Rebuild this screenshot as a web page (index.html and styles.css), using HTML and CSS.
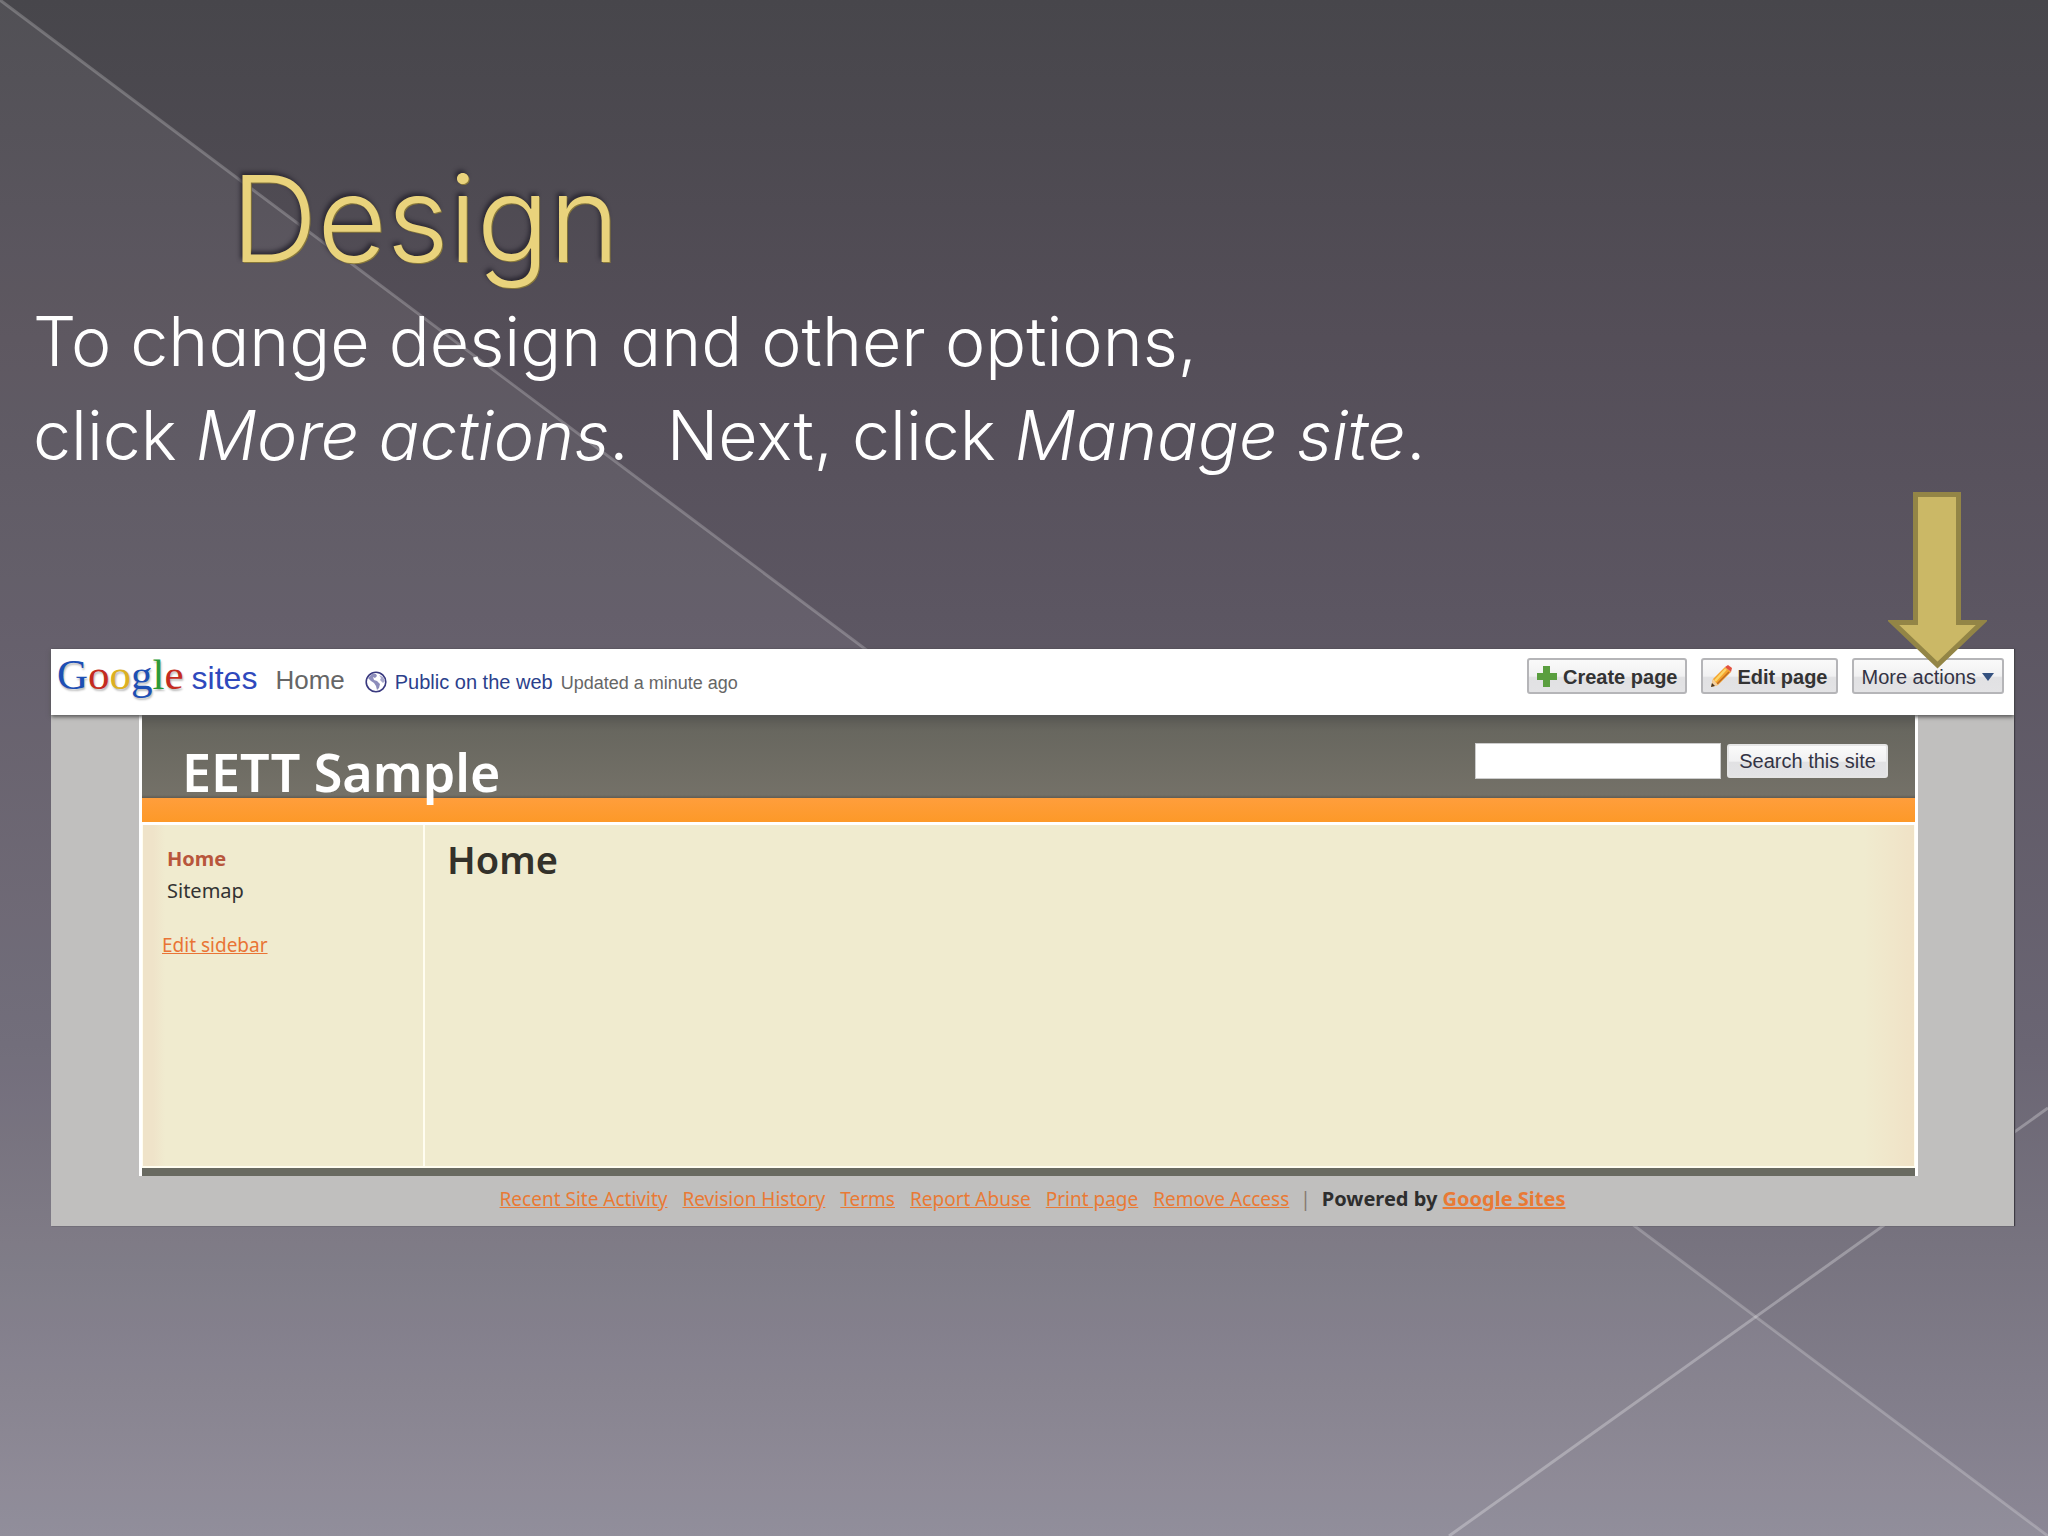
FILE: index.html
```html
<!DOCTYPE html>
<html lang="en">
<head>
  <meta charset="UTF-8">
  <meta name="viewport" content="width=device-width, initial-scale=1.0">
  <title>Design</title>
  <link rel="stylesheet" href="styles.css">
</head>
<body>

  <!-- diagonal background lines -->
  <svg class="backdrop" viewBox="0 0 2048 1536" preserveAspectRatio="none" aria-hidden="true">
    <path d="M0 0L2048 1536H0Z" fill="#fff" fill-opacity=".06"/>
    <path d="M0 0L2048 1536" stroke="#fff" stroke-opacity=".22" stroke-width="3"/>
    <path d="M1449 1536L2048 1108" stroke="#fff" stroke-opacity=".28" stroke-width="3"/>
  </svg>

  <main class="slide">
    <h1 class="slide-title">Design</h1>
    <p class="slide-text">To change design and other options,<br>click <em>More actions</em>.&nbsp; Next, click <em>Manage site</em>.</p>

    <section class="browser">
      <svg class="arrow" viewBox="0 0 99 177" aria-hidden="true">
        <path d="M27.5 2.5H70.5V130.500H94L49.500 173L5 130.500H27.500Z" fill="#cbb866" stroke="#938546" stroke-width="5"/>
      </svg>

      <header class="toolbar">
        <div class="logo">
          <span class="google"><span class="blue">G</span><span class="red">o</span><span class="yellow">o</span><span class="blue">g</span><span class="green">l</span><span class="red">e</span></span>
          <span class="sites">sites</span>
        </div>
        <span class="page-name">Home</span>
        <a class="public" href="#">
          <svg class="globe" viewBox="0 0 22 22" aria-hidden="true">
            <circle cx="11" cy="11" r="9.800" fill="#fff" stroke="#39397f" stroke-width="1.600"/>
            <path d="M3 7L7 3L11 3L12 5L10 7L8 6L9 9L12 10L15 13L14 17L12 19L11 15L9 12L6 10Z" fill="#8d8dbb"/>
            <path d="M14 4L18 6L20 10L18 12L15 9L16 7Z" fill="#a9a9cc"/>
          </svg>
          Public on the web
        </a>
        <span class="updated">Updated a minute ago</span>
        <div class="actions">
          <button class="btn bold" type="button">
            <svg class="icon" viewBox="0 0 22 24" aria-hidden="true">
              <path d="M7 1H14V8H21V15H14V22H7V15H1V8H7Z" fill="#5a9e3f"/>
            </svg>
            Create page
          </button>
          <button class="btn bold" type="button">
            <svg class="icon" viewBox="0 0 22 24" aria-hidden="true">
              <path d="M1 22L3 14L15 2L21 7L8 20Z" fill="#f5a32c"/>
              <path d="M5 16L16 4" stroke="#fbd66b" stroke-width="2.500"/>
              <path d="M7 19L19 7" stroke="#bd6a22" stroke-width="1.500"/>
              <path d="M1 22L3 14L8 20Z" fill="#f3cf9e"/>
              <path d="M1 22L2 18L5 21Z" fill="#443322"/>
              <path d="M15 2L18 0L22 3L21 7Z" fill="#e2513f"/>
            </svg>
            Edit page
          </button>
          <button class="btn" type="button">
            More actions
            <svg class="caret" viewBox="0 0 12 8" aria-hidden="true"><path d="M0 0H12L6 8Z" fill="#34517f"/></svg>
          </button>
        </div>
      </header>

      <div class="site">
        <header class="site-header">
          <h2 class="site-title">EETT Sample</h2>
          <form class="search">
            <input class="search-box" type="text" aria-label="Search this site">
            <button class="btn search-btn" type="button">Search this site</button>
          </form>
        </header>
        <div class="site-body">
          <nav class="sidebar">
            <a class="nav-link current" href="#">Home</a>
            <a class="nav-link" href="#">Sitemap</a>
            <a class="edit-link" href="#">Edit sidebar</a>
          </nav>
          <article class="content">
            <h3 class="content-title">Home</h3>
          </article>
        </div>
      </div>

      <footer class="site-footer">
        <a href="#">Recent Site Activity</a>
        <a href="#">Revision History</a>
        <a href="#">Terms</a>
        <a href="#">Report Abuse</a>
        <a href="#">Print page</a>
        <a href="#">Remove Access</a>
        <span class="divider">|</span>
        <strong class="powered">Powered by <a href="#">Google Sites</a></strong>
      </footer>
    </section>
  </main>

</body>
</html>
```
FILE: styles.css
```css
* {
  box-sizing: border-box;
}

body {
  margin: 0;
  min-height: 100vh;
  position: relative;
  background: linear-gradient(#47464b 0%, #544e58 22%, #5c5662 40%, #6a6573 68%, #77737f 81%, #8b8795 100%);
  font-family: "Liberation Sans", Arial, sans-serif;
}

h1, h2, h3, p {
  margin: 0;
}

.backdrop {
  position: absolute;
  top: 0;
  left: 0;
  width: 100%;
  height: 100%;
}

.slide {
  position: relative;
  padding: 144px 34px 0 51px;
}

.slide-title {
  padding-left: 180px;
  font-family: Inter, sans-serif;
  font-feature-settings: "cv11";
  font-size: 120px;
  font-weight: 300;
  line-height: 150px;
  color: #e9d37c;
  text-shadow: -2px -3px 4px #2c2933, 1px 1px 0 #8c7c3c;
}

.slide-text {
  margin-left: -18px;
  font-family: Inter, sans-serif;
  font-feature-settings: "cv11";
  font-size: 68px;
  font-weight: 300;
  line-height: 94px;
  color: #fff;
}

.browser {
  position: relative;
  margin-top: 167px;
  background: #c0bfbe;
  box-shadow: 1px 0 1px #3e3b44;
}

.arrow {
  position: absolute;
  top: -157px;
  right: 27px;
  z-index: 2;
  width: 99px;
  height: 177px;
}

.toolbar {
  position: relative;
  display: flex;
  align-items: baseline;
  height: 66px;
  padding: 1px 10px 0 6px;
  background: #fff;
  box-shadow: 0 2px 4px #555;
}

.logo {
  display: flex;
  align-items: baseline;
  gap: 8px;
}

.google {
  font-family: "Liberation Serif", serif;
  font-size: 43px;
  line-height: 50px;
  text-shadow: 1px 2px 2px #bbb;
}

.blue { color: #1d4fb4; }
.red { color: #c42b20; }
.yellow { color: #dcb022; }
.green { color: #2c9a36; }

.sites {
  font-size: 32px;
  color: #2f49bd;
}

.page-name {
  margin-left: 18px;
  font-size: 26px;
  color: #666;
}

.public {
  display: flex;
  align-items: baseline;
  gap: 8px;
  margin-left: 20px;
  font-size: 20px;
  color: #2b3f8c;
  text-decoration: none;
}

.globe {
  width: 22px;
  height: 22px;
  align-self: flex-start;
}

.updated {
  margin-left: 8px;
  font-size: 18px;
  color: #666;
}

.actions {
  display: flex;
  align-self: flex-start;
  gap: 14px;
  margin-left: auto;
  padding-top: 8px;
}

.btn {
  display: flex;
  align-items: center;
  justify-content: center;
  gap: 6px;
  height: 36px;
  padding: 2px 8px 0;
  border: 2px solid #b5b5b8;
  border-radius: 3px;
  background: linear-gradient(#fafafa 0%, #f1f1f2 50%, #e1e1e3 55%, #e3e3e5 100%);
  font-family: inherit;
  font-size: 20px;
  color: #333344;
  white-space: nowrap;
}

.bold {
  gap: 5px;
  padding: 2px 8px 0 7px;
  font-weight: bold;
  color: #333;
}

.icon {
  width: 22px;
  height: 24px;
}

.caret {
  width: 12px;
  height: 8px;
}

.site {
  margin: 0 96px 0 88px;
  border: solid #fff;
  border-width: 0 3px;
  background: #696a61;
  padding-bottom: 8px;
  font-family: "Noto Sans", sans-serif;
}

.site-header {
  display: flex;
  align-items: center;
  justify-content: space-between;
  height: 110px;
  padding: 0 27px 16px 40px;
  border-bottom: 3px solid #fff;
  background: linear-gradient(#595853 0, #68675f 16px, #747168 80px, #5f5b52 83px, #ff9e3c 83px, #fd9928 100%);
}

.site-title {
  font-size: 52px;
  font-weight: 600;
  line-height: 56px;
  padding-top: 22px;
  color: #fff;
}

.search {
  display: flex;
  align-items: center;
  gap: 6px;
  font-family: "Liberation Sans", Arial, sans-serif;
}

.search-box {
  width: 246px;
  height: 36px;
  border: 1px solid #ccc;
  background: #fff;
  font-size: 20px;
}

.search-btn {
  height: 34px;
  padding: 2px 10px 0;
  border-color: #e5e5e5;
}

.site-body {
  display: flex;
  min-height: 343px;
  border: solid #fffdf0;
  border-width: 0 1px 2px;
  background: linear-gradient(to right, #efe3c9 0, #efe3c9 10px, #f0ebcf 22px, #f0ebcf calc(100% - 50px), #f0e2c6 100%);
}

.sidebar {
  display: flex;
  flex-direction: column;
  align-items: flex-start;
  width: 282px;
  padding: 18px 19px;
  border-right: 2px solid #fffdf0;
}

.nav-link {
  padding-left: 5px;
  font-size: 20px;
  line-height: 32px;
  color: #333;
  text-decoration: none;
}

.nav-link.current {
  font-weight: bold;
  color: #b8563c;
}

.edit-link {
  margin-top: 24px;
  font-size: 19px;
  line-height: 28px;
  color: #e97435;
}

.content {
  flex: 1;
  padding: 9px 22px;
}

.content-title {
  font-size: 38px;
  font-weight: 600;
  line-height: 50px;
  color: #33312a;
}

.site-footer {
  display: flex;
  align-items: baseline;
  justify-content: center;
  gap: 15px;
  padding: 9px 0 13px;
  font-family: "Noto Sans", sans-serif;
  font-size: 19px;
  line-height: 28px;
  color: #2e2e2e;
}

.site-footer a {
  color: #e97a35;
}

.divider {
  margin: 0 -4px;
  color: #85796f;
}

.powered {
  font-size: 20px;
}
```
